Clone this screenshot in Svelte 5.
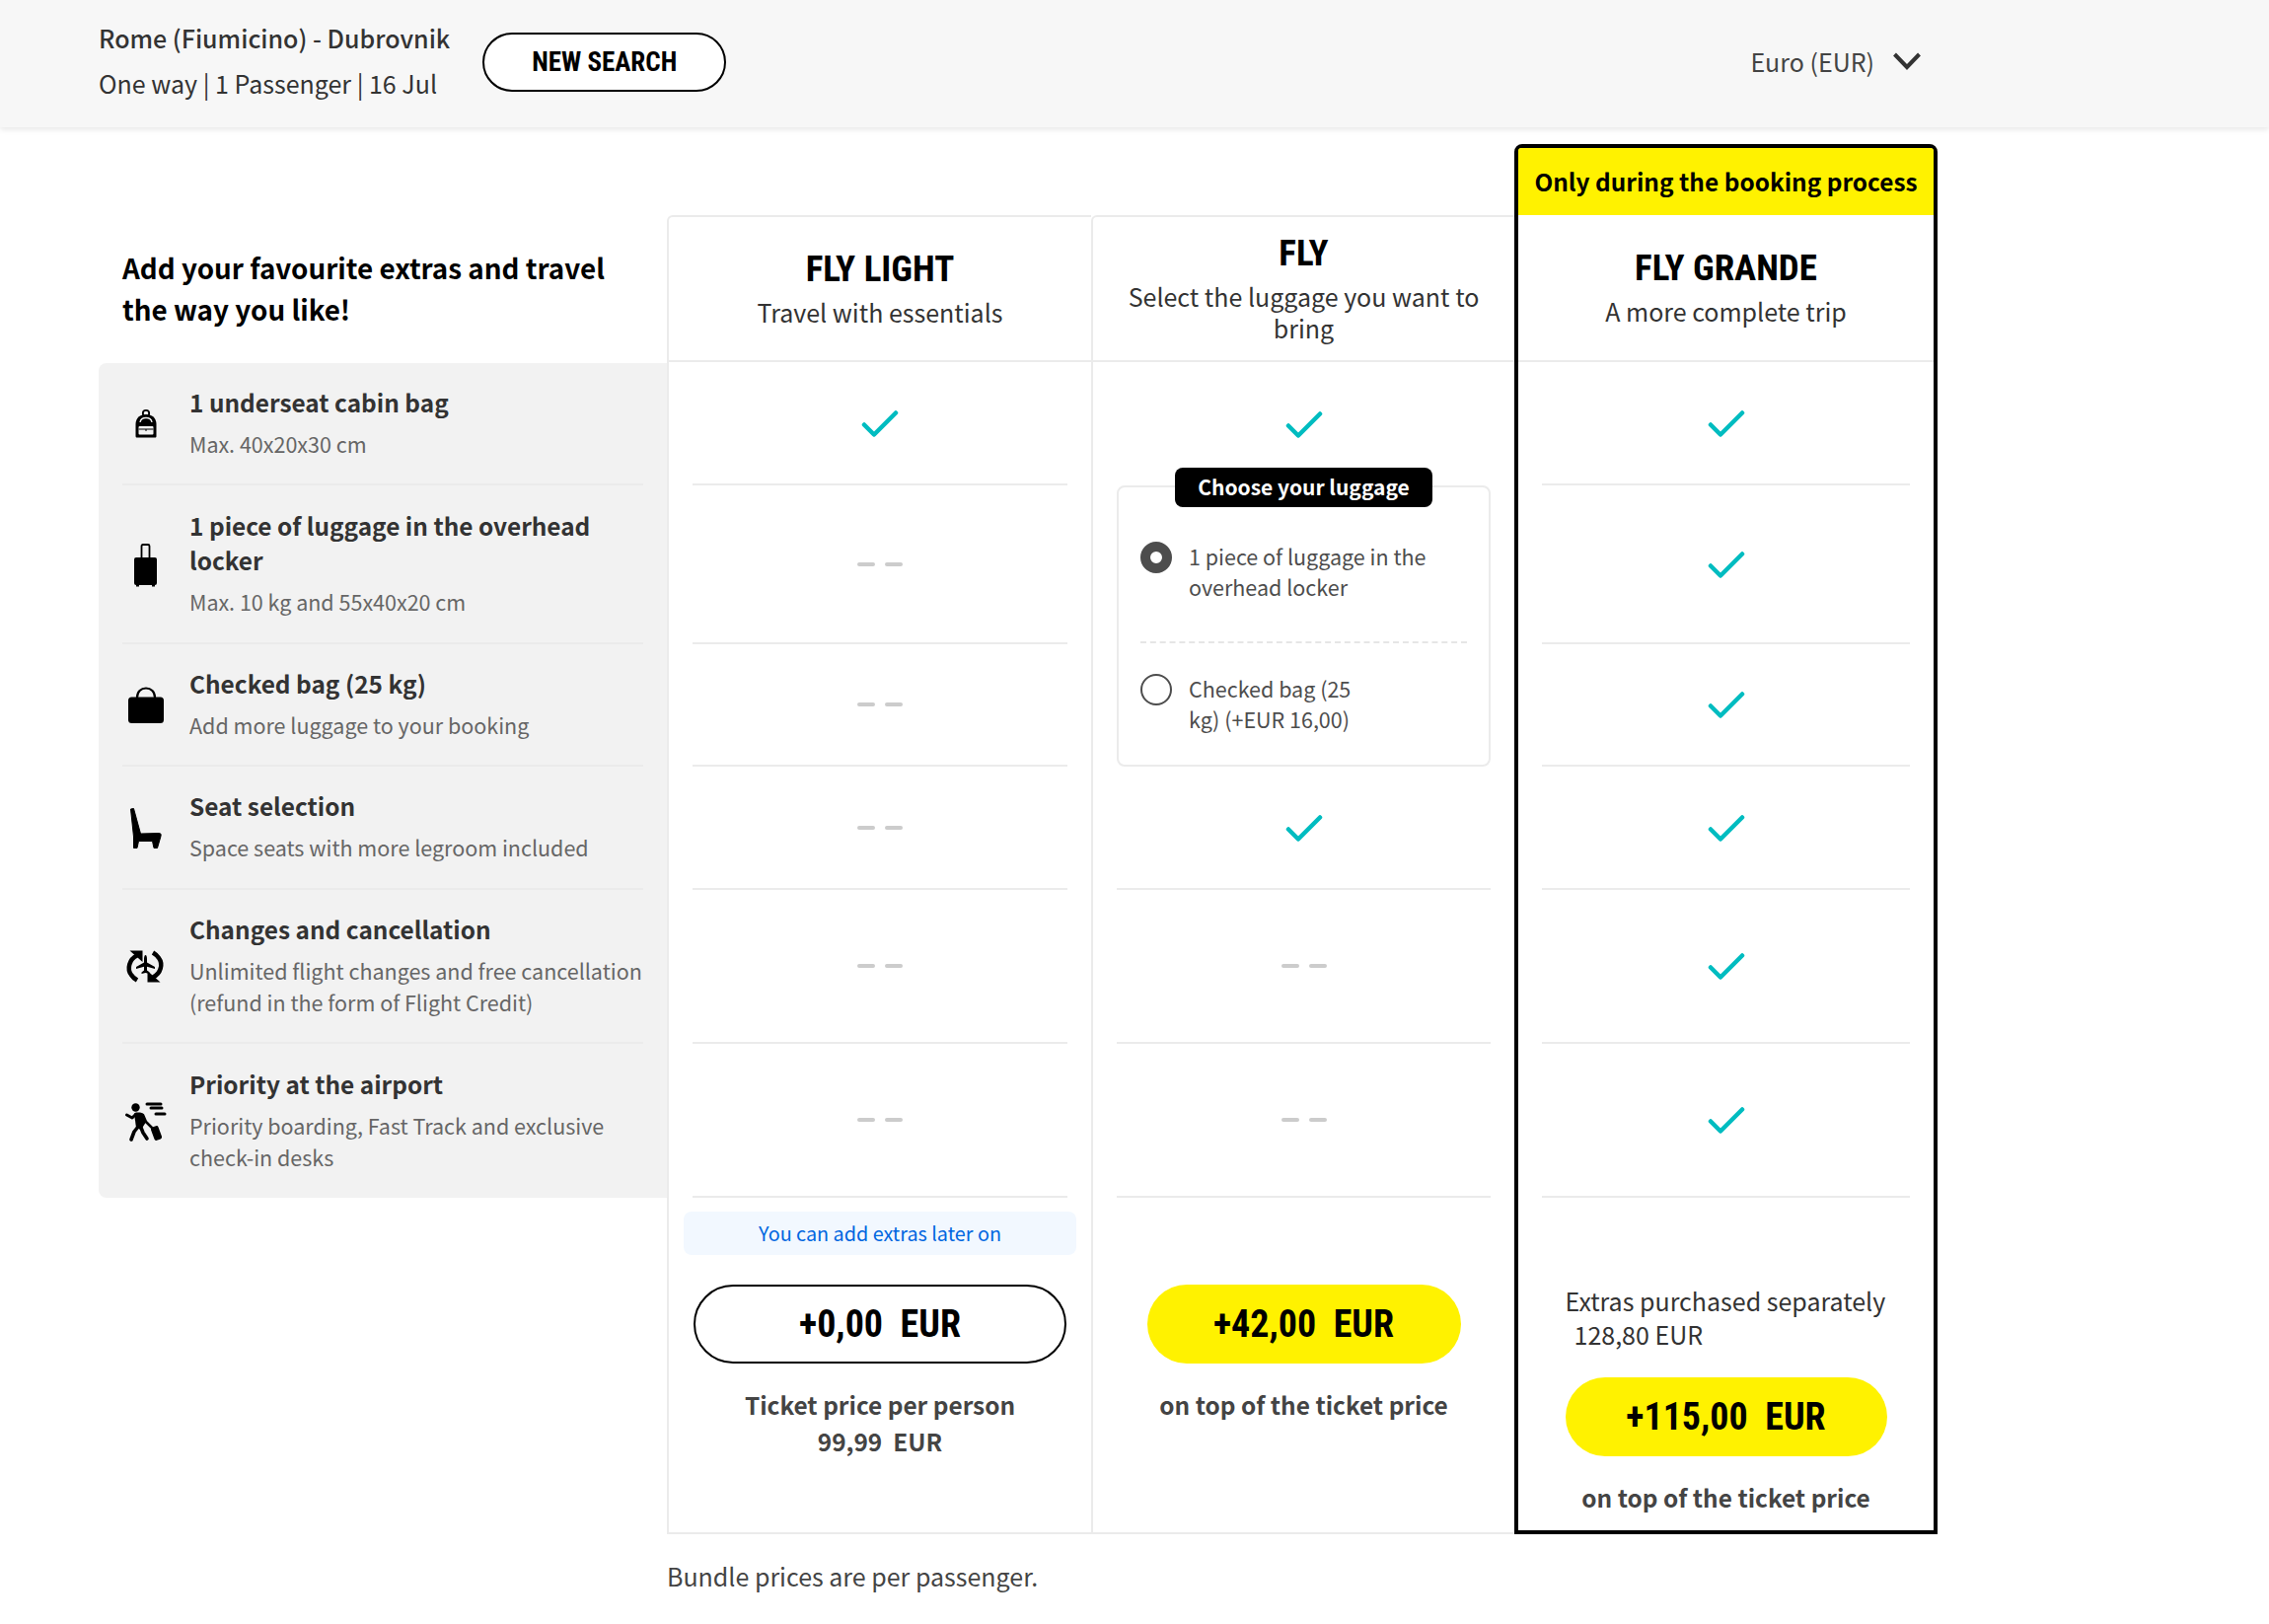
<script>
  const rowHeights = [125, 161, 124, 125, 156, 156];

  const features = [
    { icon: 'backpack', title: '1 underseat cabin bag', desc: 'Max. 40x20x30 cm' },
    { icon: 'trolley', title: '1 piece of luggage in the overhead locker', desc: 'Max. 10 kg and 55x40x20 cm' },
    { icon: 'bag', title: 'Checked bag (25 kg)', desc: 'Add more luggage to your booking' },
    { icon: 'seat', title: 'Seat selection', desc: 'Space seats with more legroom included' },
    { icon: 'change', title: 'Changes and cancellation', desc: 'Unlimited flight changes and free cancellation (refund in the form of Flight Credit)' },
    { icon: 'priority', title: 'Priority at the airport', desc: 'Priority boarding, Fast Track and exclusive check-in desks' }
  ];

  const light = [true, false, false, false, false, false];
  const grande = [true, true, true, true, true, true];
</script>

{#snippet mark(on)}
  {#if on}
    <svg class="check" width="38" height="28" viewBox="0 0 38 28">
      <path d="M3 15.5 L13 25.5 L35 3.5" fill="none" stroke="#00bcc0" stroke-width="4.5" stroke-linecap="round" stroke-linejoin="round" />
    </svg>
  {:else}
    <span class="dashes"><i></i><i></i></span>
  {/if}
{/snippet}

{#snippet icon(name)}
  <svg class="ficon" width="48" height="48" viewBox="0 0 48 48">
    {#if name === 'backpack'}
      <circle cx="24" cy="14" r="3.2" fill="none" stroke="#000" stroke-width="1.8" />
      <path d="M13.5 37 V25 C13.5 18.5 18 15 24 15 C30 15 34.5 18.5 34.5 25 V37 C34.5 38 34 38.5 33 38.5 H15 C14 38.5 13.5 38 13.5 37 Z" fill="#000" />
      <path d="M18 23 C18.5 20 21 18.5 24 18.5 C27 18.5 29.5 20 30 23" fill="none" stroke="#f2f2f2" stroke-width="1.3" />
      <rect x="16.5" y="27" width="15" height="8.5" rx="1" fill="#f2f2f2" />
      <path d="M16.5 30 H31.5 M24 30 V32" stroke="#000" stroke-width="1" />
    {:else if name === 'trolley'}
      <path d="M19.5 17 V5.5 C19.5 4.5 20 4 21 4 H26 C27 4 27.5 4.5 27.5 5.5 V17" fill="none" stroke="#000" stroke-width="1.8" />
      <rect x="12" y="17" width="23" height="28" rx="2" fill="#000" />
      <rect x="14" y="44" width="3" height="2.5" fill="#000" />
      <rect x="30" y="44" width="3" height="2.5" fill="#000" />
    {:else if name === 'bag'}
      <path d="M15 17 C15 11 19 7.5 24 7.5 C29 7.5 33 11 33 17" fill="none" stroke="#000" stroke-width="2.2" />
      <rect x="6" y="16.5" width="36" height="26.5" rx="3.5" fill="#000" />
    {:else if name === 'seat'}
      <path d="M8.5 5 L11.5 4.5 L18.5 30 L37.5 29.5 C39 29.5 39.5 31 39 32.5 L35.5 44.5 L32 44.5 L30.5 37.5 L16.5 37.5 L15 44.5 L11.5 44.5 L11.5 33 Z" fill="#000" stroke="#000" stroke-linejoin="round" />
    {:else if name === 'change'}
      <path d="M15 13.5 C7 17 4.5 27 9 33 C10.5 35.5 12.5 37 15 38.5" fill="none" stroke="#000" stroke-width="4.5" />
      <path d="M7.5 8.5 H20.5 V20 Z" fill="#000" />
      <path d="M31 10.5 C33.5 12 35.5 13.5 37 16 C41.5 22 39 32 31 35.5" fill="none" stroke="#000" stroke-width="4.5" />
      <path d="M38.5 40.5 H25.5 V29 Z" fill="#000" />
      <path d="M23.5 13 C24.5 13 25 15 25 17 V20.5 L33 25 V27 L25 24.8 V28.5 L27.5 30.5 V32 L23.5 31 L19.5 32 V30.5 L22 28.5 V24.8 L14 27 V25 L22 20.5 V17 C22 15 22.5 13 23.5 13 Z" fill="#000" />
    {:else if name === 'priority'}
      <circle cx="13.5" cy="10.5" r="4.2" fill="#000" />
      <path d="M25 7 H39 M29 11 H40 M34 17 H43" stroke="#000" stroke-width="3" stroke-linecap="round" />
      <path d="M12 16.5 C14 15 19 15 21 16.5 L23.5 26 L19 33 L14 31 Z" fill="#000" />
      <path d="M4.5 18 L10 21 L14 17" fill="none" stroke="#000" stroke-width="3" stroke-linecap="round" stroke-linejoin="round" />
      <path d="M21 18 L24 25 L30 31" fill="none" stroke="#000" stroke-width="2.5" stroke-linecap="round" stroke-linejoin="round" />
      <path d="M16 30 L12 35 L9 43 M19 31 L21 36 L25 42" fill="none" stroke="#000" stroke-width="3.6" stroke-linecap="round" stroke-linejoin="round" />
      <rect x="30.5" y="29.5" width="8" height="14" rx="2" transform="rotate(-20 34.5 36.5)" fill="#000" />
    {/if}
  </svg>
{/snippet}

<header class="top">
  <div class="trip">
    <div class="route">Rome (Fiumicino) - Dubrovnik</div>
    <div class="meta">One way | 1 Passenger | 16 Jul</div>
  </div>
  <button class="new-search">NEW SEARCH</button>
  <div class="currency">
    <span>Euro (EUR)</span>
    <svg width="30" height="20" viewBox="0 0 30 20">
      <path d="M2.5 3 L15 16 L27.5 3" fill="none" stroke="#333" stroke-width="4" />
    </svg>
  </div>
</header>

<main class="page">
  <div class="compare">
    <section class="features">
      <h2>Add your favourite extras and travel the way you like!</h2>
      <div class="panel">
        {#each features as f, i}
          <div class="feature" style="height: {rowHeights[i] - (i === 0 ? 1 : 0)}px">
            {@render icon(f.icon)}
            <div class="ftext">
              <div class="ftitle">{f.title}</div>
              <div class="fdesc">{f.desc}</div>
            </div>
          </div>
        {/each}
      </div>
    </section>

    <section class="plan first-plan">
      <div class="plan-head">
        <h3>FLY LIGHT</h3>
        <p>Travel with essentials</p>
      </div>
      {#each light as on, i}
        <div class="row" style="height: {rowHeights[i]}px">{@render mark(on)}</div>
      {/each}
      <div class="plan-foot">
        <div class="note">You can add extras later on</div>
        <button class="price outline">+0,00&nbsp; EUR</button>
        <div class="label">Ticket price per person<br />99,99&nbsp; EUR</div>
      </div>
    </section>

    <section class="plan">
      <div class="plan-head">
        <h3>FLY</h3>
        <p>Select the luggage you want to bring</p>
      </div>
      <div class="row plain" style="height: {rowHeights[0]}px">{@render mark(true)}</div>
      <div class="luggage-slot" style="height: {rowHeights[1] + rowHeights[2]}px">
        <div class="luggage">
          <div class="choose">Choose your luggage</div>
          <div class="option first">
            <span class="radio on"></span>
            <span class="opt-text">1 piece of luggage in the overhead locker</span>
          </div>
          <div class="option">
            <span class="radio"></span>
            <span class="opt-text">Checked bag (25<br />kg) (+EUR 16,00)</span>
          </div>
        </div>
      </div>
      <div class="row" style="height: {rowHeights[3]}px">{@render mark(true)}</div>
      <div class="row" style="height: {rowHeights[4]}px">{@render mark(false)}</div>
      <div class="row" style="height: {rowHeights[5]}px">{@render mark(false)}</div>
      <div class="plan-foot">
        <div class="note-space"></div>
        <button class="price yellow small">+42,00&nbsp; EUR</button>
        <div class="label">on top of the ticket price</div>
      </div>
    </section>

    <section class="plan best">
      <div class="banner">Only during the booking process</div>
      <div class="plan-head">
        <h3>FLY GRANDE</h3>
        <p>A more complete trip</p>
      </div>
      {#each grande as on, i}
        <div class="row" style="height: {rowHeights[i]}px">{@render mark(on)}</div>
      {/each}
      <div class="plan-foot">
        <div class="extras">Extras purchased separately<br /><span class="amount">128,80 EUR</span></div>
        <button class="price yellow mid">+115,00&nbsp; EUR</button>
        <div class="label">on top of the ticket price</div>
      </div>
    </section>
  </div>
  <p class="fine">Bundle prices are per passenger.</p>
</main>

<style>
  :global(body) {
    margin: 0;
    background: #fff;
    font-family: "Noto Sans CJK SC", "Noto Sans", sans-serif;
    color: #333;
  }

  button {
    font-family: inherit;
    cursor: pointer;
  }

  .top {
    box-sizing: border-box;
    height: 129px;
    width: 100%;
    padding: 0 352px 3px 100px;
    display: flex;
    align-items: center;
    background: #f7f7f7;
    box-shadow: 0 2px 6px rgba(0, 0, 0, 0.1);
  }

  .trip {
    margin-bottom: 5px;
  }

  .route {
    font-size: 25px;
    font-weight: 500;
    line-height: 46px;
  }

  .meta {
    font-size: 25px;
    line-height: 46px;
  }

  .new-search {
    margin-left: 33px;
    width: 247px;
    height: 60px;
    border: 2.5px solid #000;
    border-radius: 30px;
    background: #fff;
    color: #000;
    font-family: Roboto, sans-serif;
    font-stretch: 75%;
    font-size: 27px;
    font-weight: 700;
  }

  .currency {
    margin-left: auto;
    margin-bottom: 3px;
    display: flex;
    align-items: center;
    gap: 18px;
    font-size: 25px;
    color: #444;
  }

  .page {
    padding: 17px 0 0 100px;
  }

  .compare {
    display: flex;
    align-items: flex-end;
  }

  .features {
    width: 576px;
    align-self: flex-start;
    margin-top: 72px;
  }

  h2 {
    box-sizing: border-box;
    height: 150px;
    margin: 0;
    padding: 32px 24px 0;
    font-size: 27.8px;
    font-weight: 700;
    line-height: 42px;
    color: #000;
  }

  .panel {
    background: #f2f2f2;
    border-radius: 8px 0 0 8px;
    padding: 0 24px;
  }

  .feature {
    box-sizing: border-box;
    display: flex;
    align-items: center;
    gap: 20px;
    border-bottom: 2px solid #ebebeb;
  }

  .feature:last-child {
    border-bottom: 0;
  }

  .ficon {
    flex: none;
  }

  .ftext {
    margin-bottom: 3px;
  }

  .ftitle {
    font-size: 24.4px;
    font-weight: 600;
    line-height: 35px;
    color: #333;
  }

  .fdesc {
    margin-top: 9px;
    font-size: 21.5px;
    line-height: 32px;
    color: #666;
  }

  .plan {
    box-sizing: border-box;
    width: 429px;
    flex: none;
    border-left: 2px solid #ebebeb;
    border-bottom: 2px solid #ebebeb;
    border-top: 2px solid #ebebeb;
    border-top-left-radius: 6px;
  }

  .first-plan {
    width: 430px;
  }

  .plan-head {
    box-sizing: border-box;
    height: 147px;
    padding: 0 24px 3px;
    display: flex;
    flex-direction: column;
    align-items: center;
    justify-content: center;
    text-align: center;
    border-bottom: 2px solid #ebebeb;
  }

  h3 {
    margin: 0 0 4px;
    font-family: Roboto, sans-serif;
    font-stretch: 75%;
    font-size: 37px;
    font-weight: 700;
    line-height: 46px;
    color: #000;
  }

  .plan-head p {
    margin: 0;
    font-size: 25px;
    line-height: 32px;
    color: #333;
  }

  .row {
    box-sizing: border-box;
    margin: 0 24px;
    display: flex;
    align-items: center;
    justify-content: center;
    border-bottom: 2px solid #ebebeb;
  }

  .row.plain {
    border-bottom: 0;
  }

  .dashes {
    display: flex;
    gap: 10px;
  }

  .dashes i {
    width: 18px;
    height: 4px;
    border-radius: 2px;
    background: #ccc;
  }

  .luggage-slot {
    box-sizing: border-box;
    margin: 0 24px;
  }

  .luggage {
    box-sizing: border-box;
    position: relative;
    height: 100%;
    border: 2px solid #ebebeb;
    border-radius: 8px;
    padding: 0 22px;
  }

  .choose {
    position: absolute;
    top: -20px;
    left: 57px;
    width: 261px;
    height: 40px;
    border-radius: 8px;
    background: #000;
    color: #fff;
    font-size: 21px;
    font-weight: 700;
    line-height: 38px;
    text-align: center;
  }

  .option {
    box-sizing: border-box;
    height: 123px;
    display: flex;
    gap: 17px;
    padding-top: 31px;
    font-size: 21.5px;
    line-height: 31px;
    color: #4d4d4d;
    align-items: flex-start;
  }

  .option.first {
    height: 158px;
    padding-top: 55px;
    border-bottom: 2px dashed #e6e6e6;
  }

  .opt-text {
    margin-top: -1px;
  }

  .radio {
    box-sizing: border-box;
    flex: none;
    width: 32px;
    height: 32px;
    border-radius: 50%;
    border: 2px solid #4d4d4d;
    background: #fff;
  }

  .radio.on {
    border: 10px solid #4d4d4d;
  }

  .plan-foot {
    box-sizing: border-box;
    height: 339px;
    padding-top: 14px;
    display: flex;
    flex-direction: column;
    align-items: center;
    text-align: center;
  }

  .note {
    width: 398px;
    height: 44px;
    border-radius: 8px;
    background: #f2f8ff;
    color: #0066e0;
    font-size: 19.8px;
    line-height: 43px;
  }

  .note-space {
    height: 44px;
  }

  .price {
    margin-top: 30px;
    height: 80px;
    border-radius: 40px;
    font-family: Roboto, sans-serif;
    font-stretch: 75%;
    font-size: 38px;
    font-weight: 700;
    color: #000;
  }

  .price.outline {
    width: 378px;
    background: #fff;
    border: 2.5px solid #000;
  }

  .price.yellow {
    background: #fff200;
    border: 0;
  }

  .price.small {
    width: 318px;
  }

  .price.mid {
    width: 326px;
    margin-top: 27px;
  }

  .label {
    margin-top: 23px;
    font-size: 24.4px;
    font-weight: 600;
    line-height: 37px;
    color: #444;
  }

  .extras {
    width: 326px;
    margin-top: 73px;
    font-size: 25px;
    line-height: 34px;
    text-align: left;
    color: #333;
  }

  .amount {
    margin-left: 9px;
  }

  .best {
    border: 4px solid #000;
    border-radius: 8px 8px 0 0;
  }

  .best .plan-head {
    height: 149px;
  }

  .best .plan-foot {
    height: 337px;
  }

  .banner {
    height: 68px;
    background: #fff200;
    color: #000;
    font-size: 24.4px;
    font-weight: 700;
    line-height: 67px;
    text-align: center;
    border-radius: 3px 3px 0 0;
  }

  .fine {
    margin: 24px 0 0 576px;
    font-size: 25px;
    line-height: 36px;
    color: #444;
  }
</style>
